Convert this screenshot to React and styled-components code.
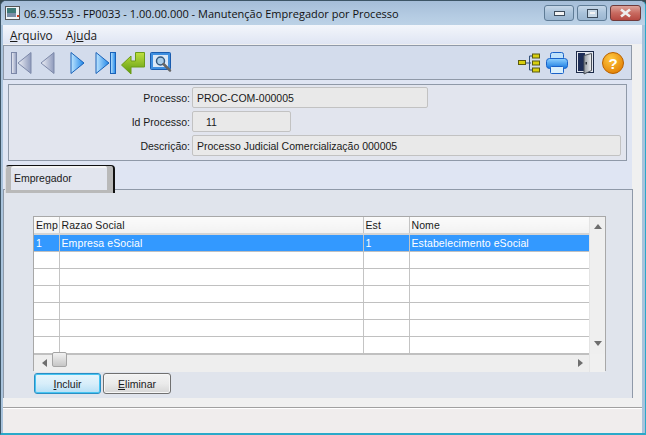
import React from "react";
import styled, { createGlobalStyle } from "styled-components";

const GlobalStyle = createGlobalStyle`
    html, body {
        margin: 0;
        padding: 0;
        background: #3a4a50;
    }
    * {
        box-sizing: border-box;
    }
`;

const Window = styled.div`
    width: 646px;
    height: 435px;
    display: flex;
    flex-direction: column;
    overflow: hidden;
    border-radius: 6px 6px 0 0;
    border: 1px solid #3d5566;
    border-bottom: 2px solid #2aa9c9;
    border-right-color: #2aa9c9;
    background: #a9c3dc;
    font-family: "Liberation Sans", sans-serif;
    color: #1a1a1a;
`;

const TitleBar = styled.div`
    height: 24px;
    flex: none;
    display: flex;
    align-items: center;
    padding-left: 4px;
    background: linear-gradient(#a5bdd8, #b4cbe2 60%, #bcd2e6);
`;

const TitleText = styled.span`
    margin-left: 3px;
    font: 11px "Open Sans", sans-serif;
    color: #111;
    white-space: nowrap;
`;

const WindowButtons = styled.div`
    margin-left: auto;
    margin-right: 4px;
    align-self: flex-start;
    margin-top: 4px;
    display: flex;
    gap: 3px;
`;

const WindowButton = styled.div`
    width: ${p => p.$w}px;
    height: 16px;
    display: flex;
    align-items: center;
    justify-content: center;
    border: 1px solid ${p => (p.$close ? "#6f3a3a" : "#5f7c96")};
    border-radius: 3px;
    background: ${p =>
        p.$close
            ? "linear-gradient(#dda39a, #c86a60 50%, #b64a42)"
            : "linear-gradient(#c6d7e8, #a9c2da 50%, #9bb6d0)"};
`;

const Inner = styled.div`
    flex: 1;
    min-height: 0;
    display: flex;
    flex-direction: column;
    margin: 0 3px 0 2px;
    background: #f0f0f0;
`;

const MenuBar = styled.div`
    height: 19px;
    flex: none;
    display: flex;
    align-items: center;
    gap: 13px;
    padding-left: 7px;
    font: 11.8px "Open Sans", sans-serif;
    background: linear-gradient(#f3f6fb, #dfe5f3);
`;

const Accel = styled.span`
    text-decoration: underline;
    text-underline-offset: 1px;
`;

const ToolRow = styled.div`
    flex: none;
    display: flex;
    margin-top: 1px;
    padding-right: 10px;
    background: linear-gradient(to right, #dfe5f3 629px, #f0f0f0 629px);
`;

const Toolbar = styled.div`
    flex: 1;
    height: 35px;
    display: flex;
    align-items: center;
    padding: 0 7px 0 7px;
    border: 1px solid #8f99a8;
    background: #d3dcec;
`;

const ToolGap = styled.div`
    margin-left: auto;
`;

const IconSlot = styled.svg`
    flex: none;
    margin-right: ${p => p.$mr || 0}px;
    display: block;
`;

const FormWrap = styled.div`
    flex: none;
    background: linear-gradient(to right, #dfe5f3 629px, #f0f0f0 629px);
    padding: 4px 15px 4px 5px;
`;

const FormPanel = styled.div`
    height: 77px;
    display: flex;
    flex-direction: column;
    padding-top: 2px;
    gap: 3px;
    border: 1px solid #8f99a8;
    background: #e2e5ee;
`;

const FormRow = styled.div`
    display: flex;
    align-items: center;
    height: 21px;
`;

const Label = styled.label`
    width: 183px;
    padding-right: 2px;
    text-align: right;
    font: 10.5px "Liberation Sans", sans-serif;
`;

const Field = styled.div`
    width: ${p => p.$w}px;
    height: 21px;
    display: flex;
    align-items: center;
    padding-left: ${p => p.$pl || 4}px;
    font: 10.5px "Liberation Sans", sans-serif;
    border: 1px solid #c2c2c2;
    border-radius: 2px;
    background: #e9e9e9;
`;

const TabStrip = styled.div`
    flex: none;
    height: 28px;
    display: flex;
    padding-left: 2px;
    background: linear-gradient(to right, #dfe5f3 629px, #f0f0f0 629px);
`;

const Tab = styled.div`
    width: 110px;
    height: 28px;
    display: flex;
    align-items: center;
    padding: 0 0 4px 8px;
    border-top: 1px solid #111;
    border-right: 2px solid #111;
    border-left: 1px solid #dcdcdc;
    border-radius: 4px 4px 0 0;
    background: #e2e5ee;
    box-shadow: inset 5px 0 0 #b9b9b9, inset -6px 0 0 #b9b9b9, inset 0 -3px 0 #b9b9b9, inset 0 2px 0 #f4f4f4;
    position: relative;
    z-index: 1;
    font: 10.5px "Liberation Sans", sans-serif;
`;

const TabPage = styled.div`
    flex: none;
    width: 630px;
    height: 209px;
    margin-top: -4px;
    padding: 26px 25px 0 29px;
    border: 1px solid #8f99a8;
    border-bottom: none;
    background: #e0e4ec;
`;

const GridBox = styled.div`
    width: 573px;
    height: 155px;
    display: grid;
    grid-template-columns: 1fr 16px;
    grid-template-rows: 1fr 18px;
    border: 1px solid #a8a8a8;
    background: #fff;
`;

const Table = styled.table`
    border-collapse: collapse;
    table-layout: fixed;
    width: 555px;
    font: 10.5px "Liberation Sans", sans-serif;
    letter-spacing: 0.1px;
    align-self: start;

    td, th {
        height: 17px;
        padding: 0 0 0 2px;
        border-right: 1px solid #c4c4c4;
        border-bottom: 1px solid #c0c0c0;
        font-weight: normal;
        text-align: left;
        white-space: nowrap;
        overflow: hidden;
    }

    th {
        background: linear-gradient(#fbfbfb, #f2f2f2);
        border-bottom: 2px solid #d4d4d4;
    }

    td:last-child, th:last-child {
        border-right: none;
    }
`;

const Row = styled.tr`
    background: ${p => (p.$selected ? "#3399ff" : "#fff")};
    color: ${p => (p.$selected ? "#fff" : "inherit")};
`;

const VScroll = styled.div`
    display: flex;
    flex-direction: column;
    justify-content: space-between;
    align-items: center;
    padding: 7px 0 8px;
    background: #efefef;
    border-left: 1px solid #e4e4e4;
`;

const HScroll = styled.div`
    grid-column: 1;
    display: flex;
    align-items: center;
    justify-content: space-between;
    padding: 0 6px 0 8px;
    background: #eeeeee;
    border-top: 1px solid #c0c0c0;
`;

const Corner = styled.div`
    background: #f0f0f0;
    border-left: 1px solid #e4e4e4;
`;

const Thumb = styled.div`
    position: absolute;
    left: 10px;
    top: -7px;
    width: 15px;
    height: 15px;
    border: 1px solid #a4a4a4;
    border-radius: 2px;
    background: linear-gradient(#f2f2f2, #dcdcdc 50%, #c6c6c6);
`;

const HLeft = styled.div`
    position: relative;
    display: flex;
    align-items: center;
`;

const ButtonRow = styled.div`
    display: flex;
    gap: 2px;
    padding: 2px 0 0 1px;
`;

const Button = styled.div`
    width: ${p => p.$w}px;
    height: 21px;
    display: flex;
    align-items: center;
    justify-content: center;
    font: 10.5px "Liberation Sans", sans-serif;
    border-radius: 3px;
    border: 1px solid ${p => (p.$focus ? "#2a8fc4" : "#707070")};
    background: ${p =>
        p.$focus
            ? "linear-gradient(#e6f5fc, #d8eefa 50%, #b6dff5)"
            : "linear-gradient(#f2f2f2, #ebebeb 50%, #d6d6d6)"};
    box-shadow: ${p => (p.$focus ? "inset 0 0 0 1px #46c4f2" : "inset 0 0 0 1px #f6f6f6")};
`;

const Spacer = styled.div`
    flex: none;
    height: 10px;
    border-bottom: 1px solid #a0a0a0;
    background: #f0f0f0;
`;

const StatusBar = styled.div`
    flex: 1;
    background: #f0eded;
    border-top: 1px solid #fff;
`;

// width 15 for a lone triangle, 21 when it has the end bar
const NavIcon = ({ dir, end, blue, mr }) => {
    const fill = blue ? "url(#navBlue)" : "url(#navGrey)";
    const stroke = blue ? "#1a62b8" : "#7c88a8";
    const w = end ? 21 : 15;
    const left = dir === "left";
    const x0 = end && left ? 7 : 1;
    const tri = left
        ? `M${x0 + 13} 1.5 V22.5 L${x0} 12 Z`
        : `M${x0} 1.5 V22.5 L${x0 + 13} 12 Z`;
    return (
        <IconSlot width={w} height="24" viewBox={`0 0 ${w} 24`} $mr={mr}>
            {end && <rect x={left ? 0.5 : 15.5} y="1.5" width="5" height="21" fill={fill} stroke={stroke} />}
            <path d={tri} fill={fill} stroke={stroke} strokeLinejoin="round" />
        </IconSlot>
    );
};

const Gradients = () => (
    <svg width="0" height="0" style={{ position: "absolute" }}>
        <defs>
            <linearGradient id="navBlue" x1="0" y1="0" x2="1" y2="0">
                <stop offset="0" stopColor="#bfe6ff" />
                <stop offset="1" stopColor="#1e86e8" />
            </linearGradient>
            <linearGradient id="navGrey" x1="0" y1="0" x2="1" y2="0">
                <stop offset="0" stopColor="#eef0f6" />
                <stop offset="1" stopColor="#8e9abc" />
            </linearGradient>
            <linearGradient id="printBody" x1="0" y1="0" x2="0" y2="1">
                <stop offset="0" stopColor="#8fd2ff" />
                <stop offset="1" stopColor="#1477e0" />
            </linearGradient>
            <linearGradient id="doorPanel" x1="0" y1="0" x2="1" y2="0">
                <stop offset="0" stopColor="#8f969e" />
                <stop offset="1" stopColor="#f2f4f6" />
            </linearGradient>
            <radialGradient id="helpBall" cx="0.4" cy="0.3" r="0.8">
                <stop offset="0" stopColor="#ffc940" />
                <stop offset="1" stopColor="#e07a00" />
            </radialGradient>
            <linearGradient id="greenArrow" x1="0" y1="0" x2="0" y2="1">
                <stop offset="0" stopColor="#c0e040" />
                <stop offset="1" stopColor="#5d9a10" />
            </linearGradient>
        </defs>
    </svg>
);

const AppIcon = () => (
    <svg width="16" height="16" viewBox="0 0 16 16">
        <rect x="0.5" y="1.5" width="14" height="13" fill="#eef3f6" stroke="#555" />
        <rect x="2" y="3" width="9" height="9" fill="#3d7a78" />
        <rect x="2" y="8" width="9" height="4" fill="#7a8fa8" />
        <rect x="12" y="10" width="2" height="2" fill="#d04020" />
    </svg>
);

const EnterIcon = () => (
    <IconSlot width="24" height="24" viewBox="0 0 24 24" $mr={5}>
        <path
            d="M14.5 1.5 H23.5 V16 H10 V23 L0.5 14 L10 5 V10 H14.5 Z"
            fill="url(#greenArrow)"
            stroke="#6c9c18"
            strokeLinejoin="round"
        />
    </IconSlot>
);

const PreviewIcon = () => (
    <IconSlot width="23" height="22" viewBox="0 0 23 22">
        <rect x="0.5" y="0.5" width="20" height="17" rx="1" fill="#3f8fe0" stroke="#1a5cae" />
        <rect x="3" y="3" width="15" height="12" fill="#dce8f6" />
        <circle cx="10.5" cy="9" r="4" fill="#a9cdea" stroke="#34587e" strokeWidth="1.5" />
        <path d="M13.5 12 L20 18.5" stroke="#666" strokeWidth="2.5" strokeLinecap="round" />
    </IconSlot>
);

const TreeIcon = () => (
    <IconSlot width="22" height="20" viewBox="0 0 22 20" $mr={6}>
        <path d="M7 10 H13 M14 3 H11.5 V17 H14" stroke="#33507a" fill="none" />
        <g fill="#d8cf10" stroke="#5a5a10">
            <rect x="0.5" y="7.5" width="7" height="4" />
            <rect x="14.5" y="1" width="7" height="4" />
            <rect x="14.5" y="8" width="7" height="4" />
            <rect x="14.5" y="15" width="7" height="4" />
        </g>
    </IconSlot>
);

const PrintIcon = () => (
    <IconSlot width="22" height="22" viewBox="0 0 22 22" $mr={8}>
        <rect x="4.5" y="0.5" width="13" height="7" rx="2" fill="#bfe2fb" stroke="#1a62c8" />
        <rect x="0.5" y="6.5" width="21" height="10" rx="3" fill="url(#printBody)" stroke="#1a62c8" />
        <rect x="4.5" y="14.5" width="13" height="7" rx="1" fill="#d9effc" stroke="#1a62c8" />
    </IconSlot>
);

const DoorIcon = () => (
    <IconSlot width="18" height="24" viewBox="0 0 18 24" $mr={8}>
        <rect x="0.5" y="0.5" width="17" height="21" fill="#e4e8f0" stroke="#1c2a48" />
        <rect x="2" y="2" width="7" height="18" fill="#1e2e58" />
        <path d="M8 4.5 L15.5 2.5 V19.5 L8 23 Z" fill="url(#doorPanel)" stroke="#4a5058" />
        <rect x="9.5" y="11" width="1.5" height="2.5" fill="#2a3038" />
    </IconSlot>
);

const HelpIcon = () => (
    <IconSlot width="22" height="22" viewBox="0 0 22 22">
        <circle cx="11" cy="11" r="10.5" fill="url(#helpBall)" stroke="#b86200" />
        <text x="11" y="16.5" textAnchor="middle" fontSize="15" fontWeight="bold" fontFamily="Liberation Sans" fill="#fff">
            ?
        </text>
    </IconSlot>
);

const Arrow = ({ dir }) => {
    const d = {
        up: "M0 5 L4 0 L8 5 Z",
        down: "M0 0 L8 0 L4 5 Z",
        left: "M5 0 L5 8 L0 4 Z",
        right: "M0 0 L0 8 L5 4 Z",
    }[dir];
    const vertical = dir === "up" || dir === "down";
    return (
        <svg width={vertical ? 8 : 5} height={vertical ? 5 : 8}>
            <path d={d} fill="#6e6e6e" />
        </svg>
    );
};

const rows = Array.from({ length: 6 });

export default function App() {
    return (
        <Window>
            <GlobalStyle />
            <Gradients />
            <TitleBar>
                <AppIcon />
                <TitleText>06.9.5553 - FP0033 - 1.00.00.000 - Manutenção Empregador por Processo</TitleText>
                <WindowButtons>
                    <WindowButton $w={30}>
                        <svg width="11" height="5"><rect x="0.5" y="0.5" width="10" height="4" fill="#f4f4f4" stroke="#3d4c5c" /></svg>
                    </WindowButton>
                    <WindowButton $w={30}>
                        <svg width="11" height="9"><rect x="0.5" y="0.5" width="10" height="8" fill="#c8d8e6" stroke="#3d4c5c" /><rect x="3" y="3" width="5" height="2" fill="#f4f4f4" /></svg>
                    </WindowButton>
                    <WindowButton $w={31} $close>
                        <svg width="13" height="10"><path d="M2 1.5 L11 8.5 M11 1.5 L2 8.5" stroke="#eee" strokeWidth="2.6" /></svg>
                    </WindowButton>
                </WindowButtons>
            </TitleBar>
            <Inner>
                <MenuBar>
                    <span><Accel>A</Accel>rquivo</span>
                    <span>Aj<Accel>u</Accel>da</span>
                </MenuBar>
                <ToolRow>
                    <Toolbar>
                        <NavIcon dir="left" end mr={8} />
                        <NavIcon dir="left" mr={15} />
                        <NavIcon dir="right" blue mr={10} />
                        <NavIcon dir="right" end blue mr={5} />
                        <EnterIcon />
                        <PreviewIcon />
                        <ToolGap />
                        <TreeIcon />
                        <PrintIcon />
                        <DoorIcon />
                        <HelpIcon />
                    </Toolbar>
                </ToolRow>
                <FormWrap>
                    <FormPanel>
                        <FormRow>
                            <Label>Processo:</Label>
                            <Field $w={236}>PROC-COM-000005</Field>
                        </FormRow>
                        <FormRow>
                            <Label>Id Processo:</Label>
                            <Field $w={99} $pl={13}>11</Field>
                        </FormRow>
                        <FormRow>
                            <Label>Descrição:</Label>
                            <Field $w={429}>Processo Judicial Comercialização 000005</Field>
                        </FormRow>
                    </FormPanel>
                </FormWrap>
                <TabStrip>
                    <Tab>Empregador</Tab>
                </TabStrip>
                <TabPage>
                    <GridBox>
                        <Table>
                            <colgroup>
                                <col width="25" />
                                <col width="304" />
                                <col width="46" />
                                <col width="180" />
                            </colgroup>
                            <thead>
                                <tr>
                                    <th>Emp</th>
                                    <th>Razao Social</th>
                                    <th>Est</th>
                                    <th>Nome</th>
                                </tr>
                            </thead>
                            <tbody>
                                <Row $selected>
                                    <td>1</td>
                                    <td>Empresa eSocial</td>
                                    <td>1</td>
                                    <td>Estabelecimento eSocial</td>
                                </Row>
                                {rows.map((_, i) => (
                                    <Row key={i}>
                                        <td />
                                        <td />
                                        <td />
                                        <td />
                                    </Row>
                                ))}
                            </tbody>
                        </Table>
                        <VScroll>
                            <Arrow dir="up" />
                            <Arrow dir="down" />
                        </VScroll>
                        <HScroll>
                            <HLeft>
                                <Arrow dir="left" />
                                <Thumb />
                            </HLeft>
                            <Arrow dir="right" />
                        </HScroll>
                        <Corner />
                    </GridBox>
                    <ButtonRow>
                        <Button $w={67} $focus><span><Accel>I</Accel>ncluir</span></Button>
                        <Button $w={68}><span><Accel>E</Accel>liminar</span></Button>
                    </ButtonRow>
                </TabPage>
                <Spacer />
                <StatusBar />
            </Inner>
        </Window>
    );
}
